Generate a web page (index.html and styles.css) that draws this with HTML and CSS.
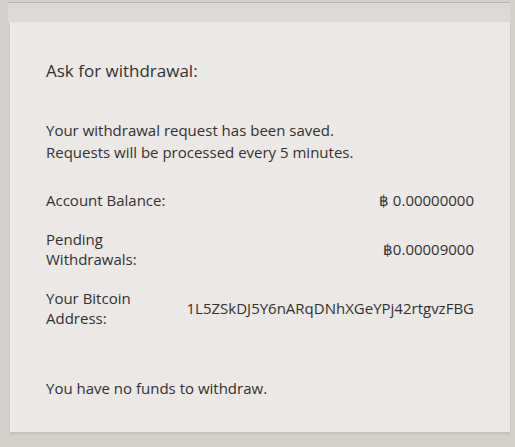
FILE: index.html
```html
<!DOCTYPE html>
<html lang="en">
<head>
    <meta charset="UTF-8">
    <title>Withdraw</title>
    <link rel="stylesheet" href="styles.css">
</head>
<body>
<div class="barra"></div>
<div class="tarjeta">
    <h2 class="titulo">Ask for withdrawal:</h2>
    <p class="aviso">Your withdrawal request has been saved.<br>Requests will be processed every 5 minutes.</p>
    <div class="fila">
        <div class="etiqueta">Account Balance:</div>
        <div class="valor">&#3647; 0.00000000</div>
    </div>
    <div class="fila">
        <div class="etiqueta">Pending Withdrawals:</div>
        <div class="valor">&#3647;0.00009000</div>
    </div>
    <div class="fila">
        <div class="etiqueta">Your Bitcoin Address:</div>
        <div class="valor">1L5ZSkDJ5Y6nARqDNhXGeYPj42rtgvzFBG</div>
    </div>
    <p class="final">You have no funds to withdraw.</p>
</div>
</body>
</html>
```

FILE: styles.css
```css
body {
    margin: 0;
    background-color: #d4d0cb;
    font-family: "Open Sans", sans-serif;
    color: #333130;
    height: 447px;
    overflow: hidden;
}
.barra {
    margin: 2px 5px 0 8px;
    height: 19px;
    border-top: 1px solid #b9b4b0;
    background-color: #dcd9d6;
}
.tarjeta {
    margin: 0 5px 0 10px;
    height: 410px;
    box-sizing: border-box;
    padding: 38px 36px 0 35px;
    background-color: #ebe8e5;
    border-left: 1px solid #f4f2f0;
    box-shadow: 0 2px 2px #c3bfbb;
}
.titulo {
    margin: 0;
    font-size: 17px;
    font-weight: normal;
    line-height: 22px;
}
.aviso {
    margin: 37px 0 0 0;
    font-size: 15px;
    line-height: 22px;
}
.fila {
    display: flex;
    align-items: center;
    margin-top: 27px;
    font-size: 15px;
    line-height: 20px;
}
.fila + .fila {
    margin-top: 19px;
}
.etiqueta {
    width: 125px;
}
.valor {
    flex: 1;
    text-align: right;
}
.final {
    margin: 50px 0 0 0;
    font-size: 15px;
    line-height: 20px;
}
```
